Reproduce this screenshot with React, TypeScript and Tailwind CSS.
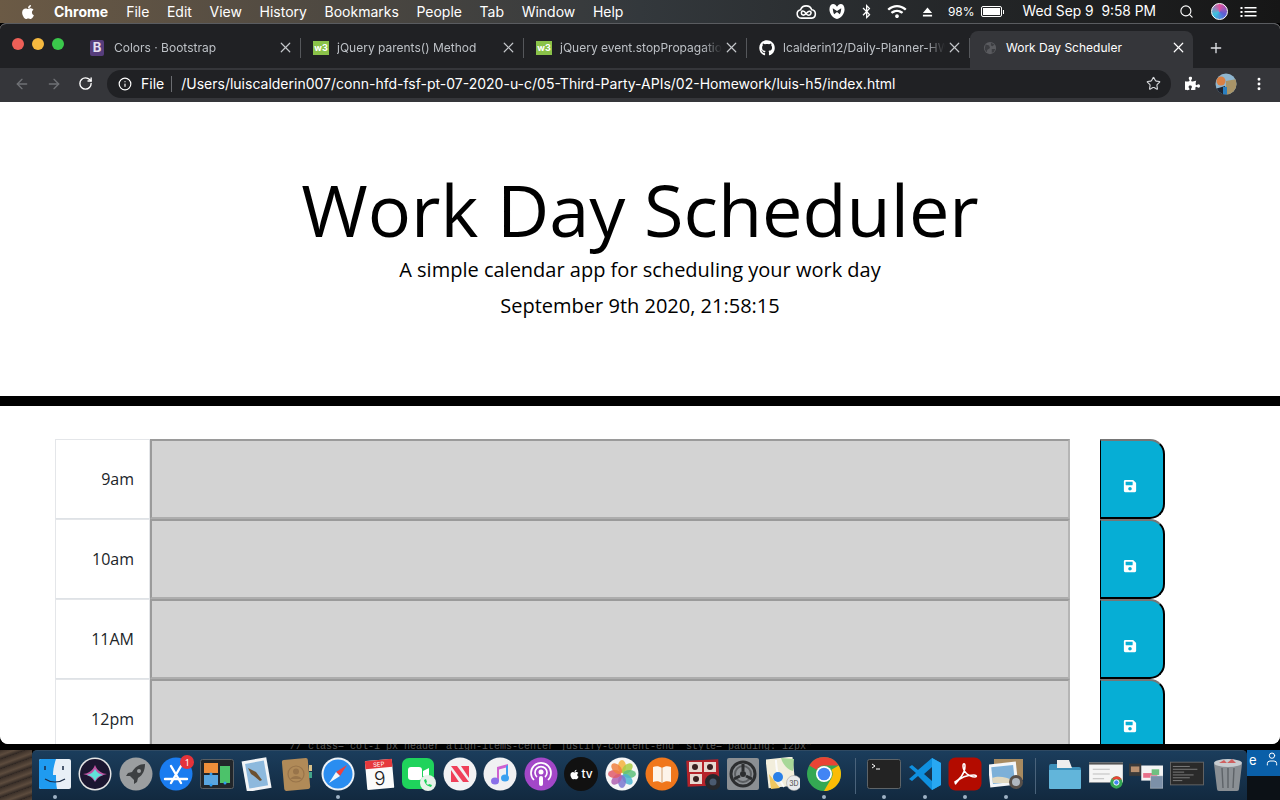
import { ArrowLeft, ArrowRight, Info, MoreVertical, Plus, RotateCw, Search, Star, User, X } from "lucide-react"
import { FaApple, FaBluetoothB, FaGithub, FaPuzzlePiece, FaSave, FaWifi } from "react-icons/fa"

const menus = ["File", "Edit", "View", "History", "Bookmarks", "People", "Tab", "Window", "Help"]
const hours = ["9am", "10am", "11AM", "12pm"]

const ui = { fontFamily: "Inter, 'Liberation Sans', sans-serif" }

function Favicon({ kind }: { kind: string }) {
  if (kind === "b")
    return (
      <span className="flex h-[16px] w-[14px] items-center justify-center rounded-[2px] bg-[#563d7c] text-[13px] leading-none font-bold text-[#e6e0f0]">
        B
      </span>
    )
  if (kind === "w3")
    return (
      <span className="flex h-[14px] w-[16px] items-center justify-center bg-[#8ac249] text-[9px] leading-none font-bold text-white">
        w3
      </span>
    )
  if (kind === "gh") return <FaGithub className="h-[16px] w-[16px] text-white" />
  return (
    <svg viewBox="0 0 16 16" className="h-[14px] w-[14px]">
      <circle cx="8" cy="8" r="7" fill="#5a5b5f" />
      <path d="M3 4l4 1 1 3-3 2-1 3-2-4zM9 2l4 2-2 2-2-1zM10 9l4 0-2 4-2 0z" fill="#3c3d41" />
    </svg>
  )
}

const tabs = [
  { kind: "b", title: "Colors · Bootstrap" },
  { kind: "w3", title: "jQuery parents() Method" },
  { kind: "w3", title: "jQuery event.stopPropagation() Method" },
  { kind: "gh", title: "lcalderin12/Daily-Planner-HW5" },
]

function MenuBar() {
  return (
    <div
      className="flex h-[23px] shrink-0 items-center bg-gradient-to-r from-[#6b5a45] via-[#33383c] to-[#161616] pl-[20px] pr-[23px] text-[14px] text-white"
      style={ui}
    >
      <FaApple className="h-[16px] w-[16px]" />
      <span className="ml-[18px] mr-[18px] font-bold">Chrome</span>
      <div className="flex gap-[17.600px]">
        {menus.map((m) => (
          <span key={m}>{m}</span>
        ))}
      </div>
      <div className="ml-auto flex items-center text-[13px]">
        <svg viewBox="0 0 24 18" className="mr-[11px] h-[16px] w-[21px]" fill="none" stroke="white" strokeWidth="1.800">
          <path d="M6 16a4.800 4.800 0 0 1-.8-9.500A6.800 6.800 0 0 1 18 6.500 4.800 4.800 0 0 1 18 16z" />
          <path d="M7 8c2.500-1 4 2 5 3.500s4 2 5-.5-1.500-3.500-3-2.500-3.500 4.500-6 4-2-3.500-1-4.500z" />
        </svg>
        <svg viewBox="0 0 18 18" className="mr-[15px] h-[17px] w-[18px]" fill="white">
          <path d="M1 6.500C1 3 3 1 5 1c1.600 0 3 1.200 4 3 1-1.800 2.400-3 4-3 2 0 4 2 4 5.500 0 5-3.500 9-8 10.500C4.500 15.500 1 11.500 1 6.500zM4.500 5.500c.2 2.500.6 4.500 1.500 6.500L9 9.500l3 2.500c.9-2 1.300-4 1.500-6.500L9 8.500z" />
        </svg>
        <FaBluetoothB className="mr-[15px] h-[15px] w-[11px]" />
        <FaWifi className="mr-[15px] h-[15px] w-[20px]" />
        <svg viewBox="0 0 12 10" className="mr-[15px] h-[10px] w-[11px]" fill="white">
          <path d="M6 0l5 6H1zM1 8h10v2H1z" />
        </svg>
        <span className="mr-[6px] text-[12px]">98%</span>
        <span className="mr-[19px] flex items-center">
          <span className="flex h-[11px] w-[21px] rounded-[2px] border border-white p-[1px]">
            <span className="h-full w-full bg-white" />
          </span>
          <span className="ml-[1px] h-[4px] w-[1px] bg-white" />
        </span>
        <span className="mr-[23px] whitespace-pre text-[13.800px]">Wed Sep 9  9:58 PM</span>
        <Search className="mr-[17px] h-[15px] w-[15px]" strokeWidth={1.8} />
        <span className="mr-[12px] h-[17px] w-[17px] rounded-full border border-white bg-[conic-gradient(#e0509c,#5b5fd6,#3cc4e0,#e0509c)]" />
        <svg viewBox="0 0 16 12" className="h-[12px] w-[17px]" fill="white">
          <path d="M0 1h2v2H0zM4 1h12v1.500H4zM0 5h2v2H0zM4 5h12v1.500H4zM0 9h2v2H0zM4 9h12v1.500H4z" />
        </svg>
      </div>
    </div>
  )
}

function TabStrip() {
  return (
    <div className="flex h-[44px] shrink-0 items-end bg-[#202124]" style={ui}>
      <div className="flex h-[37px] w-[78px] shrink-0 items-start gap-[8px] pl-[12px] pt-[7px]">
        <span className="h-[12px] w-[12px] rounded-full bg-[#ed5f57]" />
        <span className="h-[12px] w-[12px] rounded-full bg-[#f5b93f]" />
        <span className="h-[12px] w-[12px] rounded-full bg-[#3ac84b]" />
      </div>
      {tabs.map((t, i) => (
        <div key={i} className="flex h-[37px] w-[223px] shrink-0 items-center pb-[4px] pl-[12px]">
          <span className="flex w-[24px] shrink-0 items-center">
            <Favicon kind={t.kind} />
          </span>
          <span className="w-[162px] overflow-hidden whitespace-nowrap text-[12px] text-[#bdc1c6] [mask-image:linear-gradient(to_right,black_88%,transparent)]">
            {t.title}
          </span>
          <X className="ml-[0.500px] h-[17px] w-[17px] shrink-0 text-[#c4c7cb]" strokeWidth={1.7} />
          <span className="ml-auto h-[20px] w-px bg-[#55575b]" />
        </div>
      ))}
      <div className="flex h-[37px] w-[223px] shrink-0 items-center rounded-t-lg bg-[#35363a] pb-[4px] pl-[13px]">
        <span className="flex w-[23px] shrink-0 items-center">
          <Favicon kind="globe" />
        </span>
        <span className="w-[165px] whitespace-nowrap text-[12px] text-white">Work Day Scheduler</span>
        <X className="ml-[-1.500px] h-[17px] w-[17px] shrink-0 text-white" strokeWidth={1.7} />
      </div>
      <div className="flex h-[37px] items-center pb-[4px] pl-[15px]">
        <Plus className="h-[16px] w-[16px] text-[#dfe1e5]" strokeWidth={2} />
      </div>
    </div>
  )
}

function Avatar() {
  return (
    <svg viewBox="0 0 22 22" className="h-[22px] w-[22px]">
      <clipPath id="avatar-clip">
        <circle cx="11" cy="11" r="10.500" />
      </clipPath>
      <g clipPath="url(#avatar-clip)">
        <rect width="22" height="22" fill="#8fb6cf" />
        <path d="M11 8l11-2v16H11z" fill="#a89468" />
        <path d="M0 16l10-3 2 9H0z" fill="#1d2430" />
        <circle cx="6" cy="8" r="4.500" fill="#d98044" />
        <rect x="8" y="14" width="4" height="8" fill="#2a7fc0" />
      </g>
    </svg>
  )
}

function Toolbar() {
  return (
    <div className="flex h-[34px] shrink-0 items-center bg-[#35363a] pb-[3px] pl-[14px]" style={ui}>
      <ArrowLeft className="h-[16px] w-[16px] text-[#6f7175]" strokeWidth={2} />
      <ArrowRight className="ml-[16px] h-[16px] w-[16px] text-[#6f7175]" strokeWidth={2} />
      <RotateCw className="ml-[16px] h-[15px] w-[15px] text-white" strokeWidth={2.2} />
      <div className="ml-[14px] flex h-[28px] w-[1064px] items-center rounded-full bg-[#202124] pl-[11px] pr-[10px] text-[14px] text-white">
        <Info className="h-[14px] w-[14px]" strokeWidth={2} />
        <span className="ml-[9px]">File</span>
        <span className="ml-[7px] h-[16px] w-px bg-[#6b6d71]" />
        <span className="ml-[9px] whitespace-nowrap">
          /Users/luiscalderin007/conn-hfd-fsf-pt-07-2020-u-c/05-Third-Party-APIs/02-Homework/luis-h5/index.html
        </span>
        <Star className="ml-auto h-[15px] w-[15px] text-[#d5d7da]" strokeWidth={1.8} />
      </div>
      <FaPuzzlePiece className="ml-[14px] h-[15px] w-[15px] text-white" />
      <span className="ml-[15px]">
        <Avatar />
      </span>
      <MoreVertical className="ml-[14px] h-[16px] w-[16px] text-white" strokeWidth={2.4} />
    </div>
  )
}

function Page() {
  return (
    <div className="min-h-0 flex-1 overflow-hidden rounded-b-lg bg-white" style={{ fontFamily: "'Open Sans', sans-serif" }}>
      <header className="h-[304px] border-b-[10px] border-black pt-[64px] text-center text-black">
        <h1 className="text-[72px] leading-[86px] font-normal">Work Day Scheduler</h1>
        <p className="mt-[3px] text-[20px] leading-[30px] font-normal">A simple calendar app for scheduling your work day</p>
        <p className="mt-[6px] text-[20px] leading-[30px]">September 9th 2020, 21:58:15</p>
      </header>
      <div className="pl-[55px] pt-[33px]">
        {hours.map((h) => (
          <div key={h} className="flex h-[80px]">
            <div className="flex w-[95px] items-center justify-end border border-[#e4e6e9] border-b-[#dee2e6] pr-[15px] text-[16px] text-[#212529]">
              {h}
            </div>
            <textarea
              readOnly
              className="h-[80px] w-[920px] resize-none border-2 border-[#b5b5b5] border-t-[#9a9a9a] border-l-[#9a9a9a] border-b-[#adadad] bg-[#d3d3d3]"
            />
            <div className="ml-[30px] flex h-[80px] w-[65px] items-center justify-center rounded-r-[15px] border-2 border-l-[1px] border-black border-t-[#767676] bg-[#06aed5] pr-[4px] pt-[14px] text-white">
              <FaSave className="h-[14px] w-[14px]" />
            </div>
          </div>
        ))}
      </div>
    </div>
  )
}

// dock icons, 34 units wide
function Finder() {
  return (
    <svg viewBox="0 0 34 34">
      <rect x="1" y="2" width="32" height="30" rx="2" fill="#e8eff6" />
      <path d="M3 2h15c-2 6-3 11-3 16h3c0 5 0 9 1 14H3a2 2 0 0 1-2-2V4a2 2 0 0 1 2-2z" fill="#1f9bf0" />
      <path d="M7 9v4M25 9v4" stroke="#1a2a44" strokeWidth="1.500" />
      <path d="M7 22c6 4 14 4 20 0" stroke="#1a2a44" strokeWidth="1.200" fill="none" />
    </svg>
  )
}
function Siri() {
  return (
    <svg viewBox="0 0 34 34">
      <circle cx="17" cy="17" r="16.500" fill="#e4e4e4" />
      <circle cx="17" cy="17" r="15" fill="#1b1630" />
      <path d="M17 8c2 6 8 9 12 9-5 1-9 3-12 8-3-5-7-7-12-8 4 0 10-3 12-9z" fill="#d35ab0" opacity="0.9" />
      <path d="M17 12c2 4 5 5 8 6-4 1-6 2-8 6-2-4-4-5-8-6 3-1 6-2 8-6z" fill="#5fe0d8" />
    </svg>
  )
}
function Launchpad() {
  return (
    <svg viewBox="0 0 34 34">
      <circle cx="17" cy="17" r="16.500" fill="#9b9ea0" />
      <path d="M26 7c-6 0-10 3-13 8l-4 1-2 3 4 0 4 4 0 4 3-2 1-4c5-3 7-8 7-14z" fill="#3d4042" />
      <circle cx="20" cy="14" r="2" fill="#9b9ea0" />
    </svg>
  )
}
function AppStore() {
  return (
    <div className="relative h-full w-full">
      <svg viewBox="0 0 34 34">
        <circle cx="17" cy="17" r="16.500" fill="#1a7cf0" />
        <path d="M12 9l10 17M22 9L12 26M6 22h22" stroke="white" strokeWidth="2.400" strokeLinecap="round" />
      </svg>
      <span className="absolute right-[-1px] top-[-2px] flex h-[14px] w-[14px] items-center justify-center rounded-full bg-[#e5333a] text-[9px] leading-none text-white">
        1
      </span>
    </div>
  )
}
function MissionControl() {
  return (
    <svg viewBox="0 0 34 34">
      <rect x="0.500" y="2.500" width="33" height="29" rx="2" fill="#22262a" stroke="#5a5f63" />
      <rect x="4" y="6" width="14" height="10" fill="#ef8e3a" />
      <rect x="4" y="18" width="14" height="10" fill="#5aa6e0" />
      <rect x="20" y="9" width="10" height="17" fill="#4cc26a" />
      <circle cx="11" cy="17" r="1.500" fill="#2e9cf0" />
      <circle cx="11" cy="28" r="1.500" fill="#2e9cf0" />
      <circle cx="25" cy="26" r="1.500" fill="#2e9cf0" />
    </svg>
  )
}
function Mail() {
  return (
    <svg viewBox="0 0 34 34">
      <rect x="4" y="2" width="25" height="31" fill="#f2f4f6" transform="rotate(-10 17 17)" />
      <rect x="7" y="5" width="19" height="25" fill="#8db9dd" transform="rotate(-10 17 17)" />
      <path d="M8 11l8 4 6 8-2 1-6-5-3-2z" fill="#6b5030" />
    </svg>
  )
}
function Contacts() {
  return (
    <svg viewBox="0 0 34 34">
      <rect x="2" y="2" width="26" height="31" rx="2" fill="#b08a58" transform="rotate(-5 15 17)" />
      <rect x="28" y="8" width="3" height="6" fill="#d8c08a" />
      <rect x="28" y="15" width="3" height="6" fill="#43a58a" />
      <circle cx="15" cy="17" r="8" fill="none" stroke="#98744a" strokeWidth="1.200" />
      <circle cx="15" cy="14.500" r="3" fill="#98744a" />
      <path d="M9 22c3-4 9-4 12 0z" fill="#98744a" />
    </svg>
  )
}
function Safari() {
  return (
    <svg viewBox="0 0 34 34">
      <circle cx="17" cy="17" r="16.500" fill="#eef2f6" />
      <circle cx="17" cy="17" r="14.500" fill="#2a8df0" />
      <path d="M26 8l-11 7 4 4z" fill="#f0403c" />
      <path d="M8 26l7-11 4 4z" fill="#f4f6f8" />
    </svg>
  )
}
function Calendar() {
  return (
    <div className="flex h-full w-full items-center justify-center">
      <svg viewBox="0 0 34 34">
        <g transform="rotate(-5 17 17)">
          <rect x="4" y="3" width="27" height="29" rx="1" fill="#fbfbfb" />
          <rect x="4" y="3" width="27" height="8" fill="#e6393c" />
          <text x="17.500" y="9.500" fontSize="6" fill="white" textAnchor="middle" fontFamily="Inter, sans-serif">
            SEP
          </text>
          <text x="17.500" y="28" fontSize="19" fontWeight="300" fill="#222" textAnchor="middle" fontFamily="Inter, sans-serif">
            9
          </text>
        </g>
      </svg>
    </div>
  )
}
function FaceTime() {
  return (
    <svg viewBox="0 0 34 34">
      <rect x="0" y="1" width="32" height="31" rx="7" fill="#1fd35c" />
      <rect x="6" y="10" width="14" height="13" rx="3" fill="white" />
      <path d="M21 14l6-3v11l-6-3z" fill="white" />
      <circle cx="26" cy="26" r="8" fill="#e8f2ea" />
      <path d="M22 23c1 4 3 6 7 7l1-2-3-1-1 1-2-2 1-1-1-3z" fill="#1fd35c" />
    </svg>
  )
}
function News() {
  return (
    <svg viewBox="0 0 34 34">
      <circle cx="17" cy="17" r="16.500" fill="#f2f2f4" />
      <path d="M8 9h6l12 16h-6zM8 13l8 12H8zM18 9h8v12z" fill="#f0405a" />
    </svg>
  )
}
function Music() {
  return (
    <svg viewBox="0 0 34 34">
      <circle cx="17" cy="17" r="16.500" fill="#f0f0f2" />
      <path d="M14 10l11-3v3l-9 2.500V24h-2z" fill="#d060d0" />
      <path d="M25 8v13h-2V9z" fill="#40a0f0" />
      <ellipse cx="12" cy="24" rx="4" ry="3.500" fill="#8a70e8" />
      <ellipse cx="22" cy="21" rx="4" ry="3.500" fill="#3aa0f0" />
    </svg>
  )
}
function Podcasts() {
  return (
    <svg viewBox="0 0 34 34" fill="none" stroke="white" strokeWidth="1.700">
      <circle cx="17" cy="17" r="16.500" fill="#a347c8" stroke="none" />
      <path d="M10 23a10 10 0 1 1 14 0M13 20a6 6 0 1 1 8 0" />
      <circle cx="17" cy="15" r="2.500" fill="white" stroke="none" />
      <rect x="15" y="19" width="4" height="10" rx="2" fill="white" stroke="none" />
    </svg>
  )
}
function AppleTv() {
  return (
    <div className="flex h-full w-full items-center justify-center gap-[1px] rounded-full bg-[#111] text-white">
      <FaApple className="h-[11px] w-[11px]" />
      <span className="text-[12px] leading-none font-medium" style={ui}>
        tv
      </span>
    </div>
  )
}
function Photos() {
  const colors = ["#f6b23c", "#a8cc44", "#5ec07a", "#4ab4d0", "#7a78d0", "#b060b0", "#e05a6a", "#f08040"]
  return (
    <svg viewBox="0 0 34 34">
      <circle cx="17" cy="17" r="16.500" fill="#f6f6f6" />
      {colors.map((c, i) => (
        <ellipse key={c} cx="17" cy="9.500" rx="4" ry="6.500" fill={c} opacity="0.85" transform={`rotate(${i * 45} 17 17)`} />
      ))}
    </svg>
  )
}
function Books() {
  return (
    <svg viewBox="0 0 34 34">
      <circle cx="17" cy="17" r="16.500" fill="#f0771c" />
      <path d="M17 11c-3-2-6-2-9-1v15c3-1 6-1 9 1 3-2 6-2 9-1V10c-3-1-6-1-9 1z" fill="#fdf4ea" />
      <path d="M17 11v15" stroke="#d0a070" />
    </svg>
  )
}
function PhotoBooth() {
  return (
    <svg viewBox="0 0 34 34">
      <rect x="1" y="3" width="32" height="26" fill="#b5232a" transform="rotate(-3 17 17)" />
      <rect x="3" y="5" width="13" height="10" fill="#e8d8d0" />
      <rect x="18" y="5" width="12" height="10" fill="#e8d8d0" />
      <rect x="4" y="17" width="12" height="10" fill="#e8d8d0" />
      <circle cx="9" cy="10" r="3" fill="#3a2020" />
      <circle cx="24" cy="10" r="3" fill="#3a2020" />
      <circle cx="10" cy="22" r="3" fill="#3a2020" />
      <circle cx="27" cy="25" r="8" fill="#26282c" />
      <circle cx="27" cy="25" r="3.500" fill="#4a5a70" />
    </svg>
  )
}
function SystemPrefs() {
  return (
    <svg viewBox="0 0 34 34" fill="none">
      <rect x="1" y="1" width="32" height="32" rx="2" fill="#8b8f93" />
      <circle cx="17" cy="17" r="12" stroke="#2c2e30" strokeWidth="3" />
      <circle cx="17" cy="17" r="8" stroke="#5a5d60" strokeWidth="2" />
      <circle cx="17" cy="17" r="3" fill="#2c2e30" />
      <path d="M17 7v7M8 22l6-3M26 22l-6-3" stroke="#2c2e30" strokeWidth="3" />
    </svg>
  )
}
function Maps() {
  return (
    <svg viewBox="0 0 34 34">
      <rect x="1" y="1" width="27" height="29" fill="#f2eedc" transform="rotate(-6 14 15)" />
      <path d="M15 1l13 1-1 12c-5-1-10-6-12-13z" fill="#a8d898" />
      <path d="M3 17l11 14-9 1z" fill="#f0c860" />
      <path d="M10 3c0 10 2 18 8 27" stroke="#fbfbfb" strokeWidth="2" fill="none" />
      <circle cx="12" cy="20" r="5" fill="#2a80e8" />
      <circle cx="28" cy="26" r="7.500" fill="#e8eaec" stroke="#999" strokeWidth="0.500" />
      <text x="28" y="28.500" fontSize="7" fill="#444" textAnchor="middle" fontFamily="Inter, sans-serif">
        3D
      </text>
    </svg>
  )
}
function ChromeIcon() {
  return (
    <svg viewBox="0 0 34 34">
      <circle cx="17" cy="17" r="17" fill="#34a853" />
      <path d="M17 0a17 17 0 0 1 14.700 8.500H17A8.500 8.500 0 0 0 9.600 12.800L2.300 8.500A17 17 0 0 1 17 0z" fill="#ea4335" />
      <path d="M31.700 8.500A17 17 0 0 1 17 34l7.400-12.700A8.500 8.500 0 0 0 24.400 12.700z" fill="#fbbc05" />
      <circle cx="17" cy="17" r="8" fill="white" />
      <circle cx="17" cy="17" r="6.300" fill="#4285f4" />
    </svg>
  )
}
function Terminal() {
  return (
    <svg viewBox="0 0 34 34" fill="none">
      <rect x="0.500" y="2.500" width="33" height="29" rx="2" fill="#232323" stroke="#5e6468" />
      <path d="M5 7l3 2-3 2M9 12h4" stroke="white" strokeWidth="1" />
    </svg>
  )
}
function VsCode() {
  return (
    <svg viewBox="0 0 34 34">
      <path d="M24 1l9 5v22l-9 5-14-14-6 5-3-2 7-6-7-6 3-2 6 5zM24 10l-8 7 8 7z" fill="#0f90df" />
      <path d="M24 1l9 5v22l-9 5V24l0-14z" fill="#28a8f2" />
    </svg>
  )
}
function Acrobat() {
  return (
    <svg viewBox="0 0 34 34">
      <rect x="0.500" y="0.500" width="33" height="33" rx="7" fill="#b30b00" />
      <path
        d="M7 25c4-2 10-8 10-16 0-3-2-3-2 0 0 6 6 11 12 11 2 0 2-2-1-2-6 0-13 2-17 7-2 2-1 3-2 0z"
        fill="none"
        stroke="white"
        strokeWidth="1.500"
      />
    </svg>
  )
}
function Preview() {
  return (
    <svg viewBox="0 0 34 34">
      <rect x="5" y="2" width="29" height="21" fill="#a78a60" />
      <rect x="0" y="6" width="28" height="23" fill="#f4f6f8" transform="rotate(-6 14 17)" />
      <rect x="3" y="9" width="22" height="17" fill="#7db0d8" transform="rotate(-6 14 17)" />
      <path d="M3 21c8-3 14 0 22 2v3H4z" fill="#e0d8c0" />
      <circle cx="27" cy="25" r="7" fill="#58504a" />
      <circle cx="27" cy="25" r="4" fill="#b0b8c0" />
    </svg>
  )
}
function Folder() {
  return (
    <svg viewBox="0 0 34 34">
      <path d="M1 9a2 2 0 0 1 2-2h10l2 3h16a2 2 0 0 1 2 2v19H1z" fill="#3b8fba" />
      <path d="M9 3h12l3 8H9z" fill="#eeeeee" />
      <path d="M1 13h32v18a1 1 0 0 1-1 1H2a1 1 0 0 1-1-1z" fill="#62b5da" />
    </svg>
  )
}
function Window1() {
  return (
    <svg viewBox="0 0 36 34">
      <rect x="0" y="6" width="36" height="21" fill="#f4f4f4" stroke="#888" strokeWidth="0.500" />
      <rect x="0" y="6" width="36" height="2" fill="#555" />
      <path d="M4 13h18M4 18h18M4 23h12" stroke="#bbb" />
      <circle cx="29" cy="27" r="6.500" fill="#34a853" />
      <path d="M29 20.500a6.500 6.500 0 0 1 5.600 3.200H24a6.500 6.500 0 0 1 5-3.200z" fill="#ea4335" />
      <circle cx="29" cy="27" r="2.800" fill="#4285f4" stroke="white" />
    </svg>
  )
}
function Window2() {
  return (
    <svg viewBox="0 0 36 34">
      <rect x="0" y="7" width="13" height="13" fill="#3a3a3a" />
      <rect x="2" y="10" width="9" height="6" fill="#b89070" />
      <rect x="13" y="9" width="23" height="16" fill="#f4f4f4" />
      <rect x="15" y="17" width="15" height="5" fill="#e8708a" />
      <rect x="24" y="13" width="8" height="6" fill="#70c080" />
      <rect x="23" y="20" width="13" height="13" fill="#7c90a8" stroke="#ddd" strokeWidth="0.500" />
    </svg>
  )
}
function Window3() {
  return (
    <svg viewBox="0 0 36 34">
      <rect x="0.500" y="5.500" width="35" height="24" fill="#2a2a2a" stroke="#666" />
      <path d="M3 10h18M3 13h26M3 16h12M3 19h22M3 22h18M3 25h10" stroke="#808080" />
    </svg>
  )
}
function Trash() {
  return (
    <svg viewBox="0 0 34 34">
      <path d="M3 7h28l-3 25a2 2 0 0 1-2 2H8a2 2 0 0 1-2-2z" fill="#8a8f94" />
      <path d="M11 11l1 20M17 11v20M23 11l-1 20" stroke="#5e6368" strokeWidth="1.400" />
      <ellipse cx="17" cy="6" rx="14" ry="4" fill="#c8ccd0" />
      <path d="M8 6l5-3 3 3 5-4 4 4z" fill="#d06060" />
    </svg>
  )
}

const dockApps = [
  { icon: <Finder />, dot: true },
  { icon: <Siri /> },
  { icon: <Launchpad /> },
  { icon: <AppStore /> },
  { icon: <MissionControl /> },
  { icon: <Mail /> },
  { icon: <Contacts /> },
  { icon: <Safari />, dot: true },
  { icon: <Calendar /> },
  { icon: <FaceTime /> },
  { icon: <News /> },
  { icon: <Music /> },
  { icon: <Podcasts /> },
  { icon: <AppleTv /> },
  { icon: <Photos /> },
  { icon: <Books /> },
  { icon: <PhotoBooth /> },
  { icon: <SystemPrefs /> },
  { icon: <Maps /> },
  { icon: <ChromeIcon />, dot: true },
]
const dockRunning = [<Terminal />, <VsCode />, <Acrobat />, <Preview />]
const dockStacks = [<Folder />, <Window1 />, <Window2 />, <Window3 />, <Trash />]

function DockItem({ children, dot }: { children: React.ReactNode; dot?: boolean }) {
  return (
    <div className="flex w-[34px] shrink-0 flex-col items-center">
      <div className="h-[34px] w-[34px]">{children}</div>
      <span className={dot ? "mt-[4px] h-[4px] w-[4px] rounded-full bg-[#9fb2c4]" : "mt-[4px] h-[4px] w-[4px]"} />
    </div>
  )
}

function Dock() {
  return (
    <div className="flex flex-1 items-start rounded-t-[5px] border-t border-[#2f4a63] bg-gradient-to-b from-[#1b3d5c] to-[#12293f] pl-[6px] pt-[6px]">
      <div className="flex gap-[6.470px]">
        {dockApps.map((a, i) => (
          <DockItem key={i} dot={a.dot}>
            {a.icon}
          </DockItem>
        ))}
      </div>
      <span className="ml-[14px] mr-[11px] mt-[1px] h-[36px] w-px bg-[#4a637b]" />
      <div className="flex gap-[6.700px]">
        {dockRunning.map((icon, i) => (
          <DockItem key={i} dot>
            {icon}
          </DockItem>
        ))}
      </div>
      <span className="ml-[12px] mr-[12px] mt-[1px] h-[36px] w-px bg-[#4a637b]" />
      <div className="flex gap-[6.700px]">
        {dockStacks.map((icon, i) => (
          <DockItem key={i}>{icon}</DockItem>
        ))}
      </div>
    </div>
  )
}

export default function App() {
  return (
    <div className="flex h-[800px] w-[1280px] flex-col overflow-hidden bg-black">
      <MenuBar />
      <div className="flex h-[721px] shrink-0 flex-col overflow-hidden rounded-t-[6px] rounded-b-lg border-t border-[#5a5c60] bg-white">
        <TabStrip />
        <Toolbar />
        <Page />
      </div>
      <div className="h-[6px] shrink-0 overflow-hidden whitespace-nowrap pl-[290px] text-[10px] leading-[6px] text-[#555]" style={{ fontFamily: "'Liberation Mono', monospace" }}>
        {'// class="col-1 px header align-items-center justify-content-end" style="padding: 12px"'}
      </div>
      <div className="flex flex-1">
        <div className="w-[32px] shrink-0 bg-[repeating-linear-gradient(160deg,#3a2f28_0px,#5d4c3e_5px,#2e2622_9px)]" />
        <Dock />
        <div className="flex w-[33px] shrink-0 flex-col">
          <div className="flex h-[26px] items-start justify-between overflow-hidden bg-[#0a5fa8] pl-[2px] text-[13px] leading-[20px] text-white" style={ui}>
            <span>e</span>
            <User className="mt-[1px] h-[16px] w-[16px] shrink-0" strokeWidth={1.5} />
          </div>
          <div className="flex-1 bg-[#0c1116]" />
        </div>
      </div>
    </div>
  )
}
